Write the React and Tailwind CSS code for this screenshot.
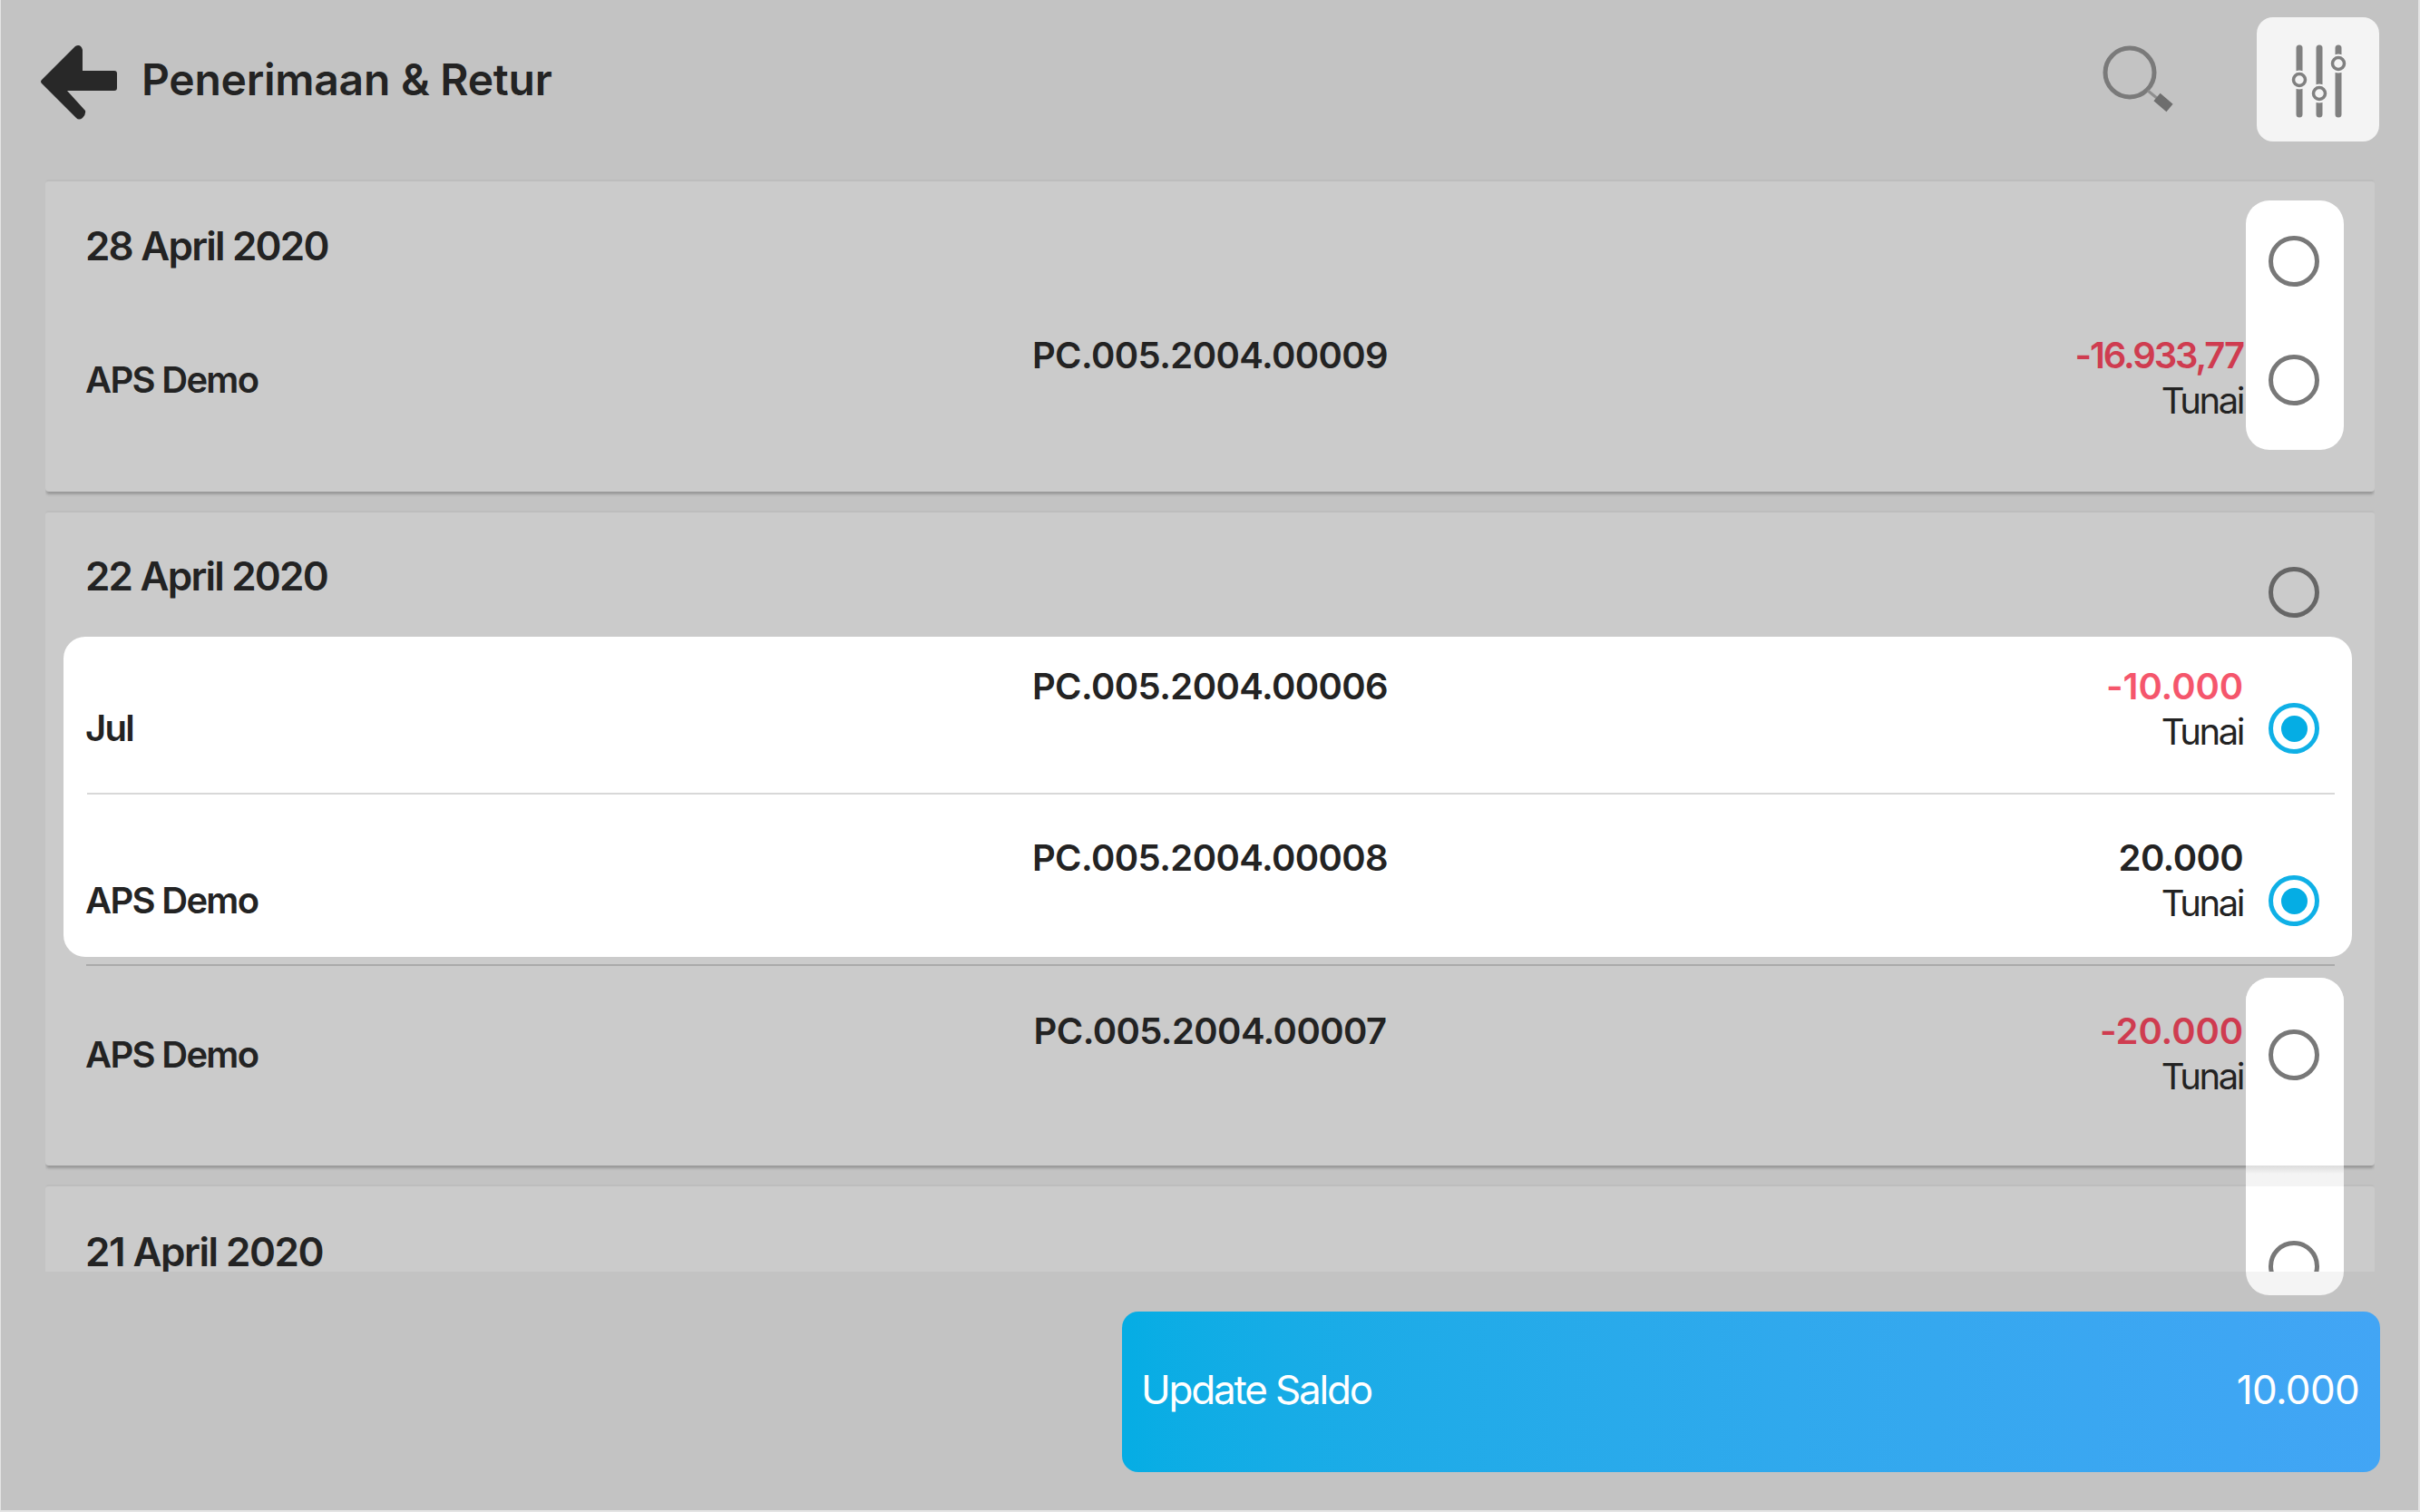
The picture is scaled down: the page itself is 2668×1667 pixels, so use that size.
import React from 'react';

const FONT = { fontFamily: 'Inter, "Noto Sans", sans-serif' };

function BackArrow() {
  return (
    <svg className="w-[85px] h-[84px]" viewBox="0 0 85 84">
      <path
        d="M2 40 L39 3 Q45 0 47 7 L47 30 L82 30 Q85 30 85 33 L85 49 Q85 52 82 52 L30 52 L50 74 Q51 78 47 82 Q43 85 40 82 L2 44 Q0 42 2 40 Z"
        fill="#282828"
      />
    </svg>
  );
}

function SearchIcon() {
  return (
    <svg className="w-[84px] h-[84px]" viewBox="0 0 84 84">
      <circle cx="33" cy="37" r="27" fill="none" stroke="#7a7a7a" strokeWidth="5" />
      <path d="M53 57 L64 66" stroke="#8f8f8f" strokeWidth="3" />
      <path d="M63 64 L77 76" stroke="#6e6e6e" strokeWidth="11" />
    </svg>
  );
}

function SlidersIcon() {
  return (
    <svg className="w-[64px] h-[84px]" viewBox="0 0 64 84">
      <g stroke="#808080" strokeWidth="7" strokeLinecap="round">
        <path d="M11 7 V80" />
        <path d="M33 7 V80" />
        <path d="M54 7 V80" />
      </g>
      <g fill="#f4f4f4" stroke="#f4f4f4" strokeWidth="3">
        <circle cx="11" cy="42" r="9" />
        <circle cx="33" cy="57" r="9" />
        <circle cx="54" cy="24" r="9" />
      </g>
      <g fill="#f4f4f4" stroke="#808080" strokeWidth="3.5">
        <circle cx="11" cy="42" r="6.5" />
        <circle cx="33" cy="57" r="6.5" />
        <circle cx="54" cy="24" r="6.5" />
      </g>
    </svg>
  );
}

function Radio({ selected, dark }) {
  if (selected) {
    return (
      <div className="w-[56px] h-[56px] shrink-0 rounded-full border-[5px] border-[#0fb0e6] flex items-center justify-center">
        <div className="w-[29px] h-[29px] rounded-full bg-[#05ade4]" />
      </div>
    );
  }
  return (
    <div className={`w-[56px] h-[56px] shrink-0 rounded-full border-[5px] ${dark ? 'border-[#666666]' : 'border-[#787878]'}`} />
  );
}

function Row({ name, code, amount, amountClass, offset, radioOffset, selected }) {
  return (
    <div className="grid grid-cols-[1fr_auto_1fr] items-start">
      <div className={`-ml-[2px] text-[40px] leading-[50px] font-semibold tracking-[-1.7px] text-[#232323] ${offset}`}>{name}</div>
      <div className="text-[40px] leading-[50px] font-semibold tracking-[-0.6px] text-[#232323]">{code}</div>
      <div className="flex justify-end">
        <div className="flex flex-col items-end">
          <div className={`text-[40px] leading-[50px] font-semibold ${amountClass}`}>{amount}</div>
          <div className="text-[40px] leading-[50px] tracking-[-2.4px] text-[#232323]">Tunai</div>
        </div>
        <div className={`w-[99px] pl-[28px] ${radioOffset}`}>{selected && <Radio selected />}</div>
      </div>
    </div>
  );
}

function DateTitle({ children, tracking }) {
  return <div className={`-ml-[2px] text-[44px] leading-[60px] font-semibold text-[#232323] ${tracking}`}>{children}</div>;
}

function Card({ children }) {
  return (
    <div className="bg-[#cbcbcb] rounded-[4px] border-t-2 border-[#bdbdbd] shadow-[0_4px_3px_-1px_#989898]">{children}</div>
  );
}

export default function App() {
  return (
    <div className="relative w-[2668px] h-[1667px] bg-[#c3c3c3] flex flex-col overflow-hidden border-l border-l-[#e4e4e4] border-r-2 border-r-[#e4e4e4] border-b-2 border-b-[#e4e4e4]" style={FONT}>
      {/* header */}
      <div className="h-[198px] flex items-start pl-[43px] pr-[43px] shrink-0">
        <div className="mt-[48px]"><BackArrow /></div>
        <h1 className="ml-[27px] mt-[58px] text-[48px] leading-[60px] font-semibold tracking-[-0.25px] text-[#232323]">Penerimaan &amp; Retur</h1>
        <div className="ml-auto mt-[43px] mr-[89px]"><SearchIcon /></div>
        <div className="mt-[19px] w-[135px] h-[137px] rounded-[18px] bg-[#f4f4f4] flex items-center justify-center"><SlidersIcon /></div>
      </div>

      {/* list */}
      <div className="h-[1204px] shrink-0 overflow-hidden ml-[49px] mr-[48px] flex flex-col gap-[21px]">
        <Card>
          <div className="pt-[41px] pb-[75px] px-[46px]">
            <DateTitle tracking="tracking-[-1.8px]">28 April 2020</DateTitle>
            <div className="mt-[66px]">
              <Row name="APS Demo" code="PC.005.2004.00009" amount="-16.933,77" amountClass="text-[#cf3c50] tracking-[-2.1px]" offset="pt-[27px]" />
            </div>
          </div>
        </Card>

        <Card>
          <div className="pt-[40px] pb-[73px]">
            <div className="flex justify-between px-[46px]">
              <DateTitle tracking="tracking-[-1.8px]">22 April 2020</DateTitle>
              <div className="mt-[20px] mr-[15px]"><Radio dark /></div>
            </div>
            <div className="mt-[21px] ml-[20px] mr-[25px] h-[353px] bg-white rounded-[24px] pl-[26px] pr-[21px] pt-[30px]">
              <Row name="Jul" code="PC.005.2004.00006" amount="-10.000" amountClass="text-[#f5566c] tracking-[-0.1px]" offset="pt-[46px]" radioOffset="pt-[43px]" selected />
              <div className="h-[2px] bg-[#d8d8d8] mt-[42px] mb-[45px] -mr-[2px]" />
              <Row name="APS Demo" code="PC.005.2004.00008" amount="20.000" amountClass="text-[#232323] tracking-[-0.6px]" offset="pt-[47px]" radioOffset="pt-[44px]" selected />
            </div>
            <div className="h-[2px] bg-[#aaaaaa] mt-[8px] ml-[45px] mr-[44px]" />
            <div className="mt-[47px] px-[46px]">
              <Row name="APS Demo" code="PC.005.2004.00007" amount="-20.000" amountClass="text-[#cf3c50] tracking-[-0.1px]" offset="pt-[26px]" />
            </div>
          </div>
        </Card>

        <Card>
          <div className="pt-[42px] pb-[76px] px-[46px]">
            <DateTitle tracking="tracking-[-1.5px]">21 April 2020</DateTitle>
          </div>
        </Card>
      </div>

      {/* footer */}
      <div className="flex justify-end pt-[44px] pr-[42px]">
        <div className="w-[1387px] h-[177px] pb-[5px] rounded-[18px] bg-gradient-to-r from-[#05ade4] to-[#42a5f5] flex items-center justify-between pl-[21px] pr-[23px] text-white text-[44px]">
          <span className="tracking-[-2.2px]">Update Saldo</span>
          <span className="tracking-[-0.7px]">10.000</span>
        </div>
      </div>

      {/* highlight cut-outs over the radios */}
      <div className="absolute top-[221px] left-[2475px] w-[108px] h-[275px] rounded-[26px] bg-white flex flex-col items-center pt-[39px] pr-[2px] gap-[75px]">
        <Radio />
        <Radio />
      </div>
      <div className="absolute top-[1078px] left-[2475px] w-[108px] h-[350px] rounded-[26px] bg-[#f4f4f4] overflow-hidden">
        <div className="h-[207px] bg-white flex justify-center pt-[57px] pr-[2px]"><Radio /></div>
        <div className="h-[23px] bg-gradient-to-b from-[#dcdcdc] via-[#f4f4f4] via-40% to-[#f4f4f4]" />
        <div className="h-[94px] bg-white flex justify-center pt-[60px] pr-[2px] overflow-hidden"><Radio /></div>
      </div>
    </div>
  );
}
